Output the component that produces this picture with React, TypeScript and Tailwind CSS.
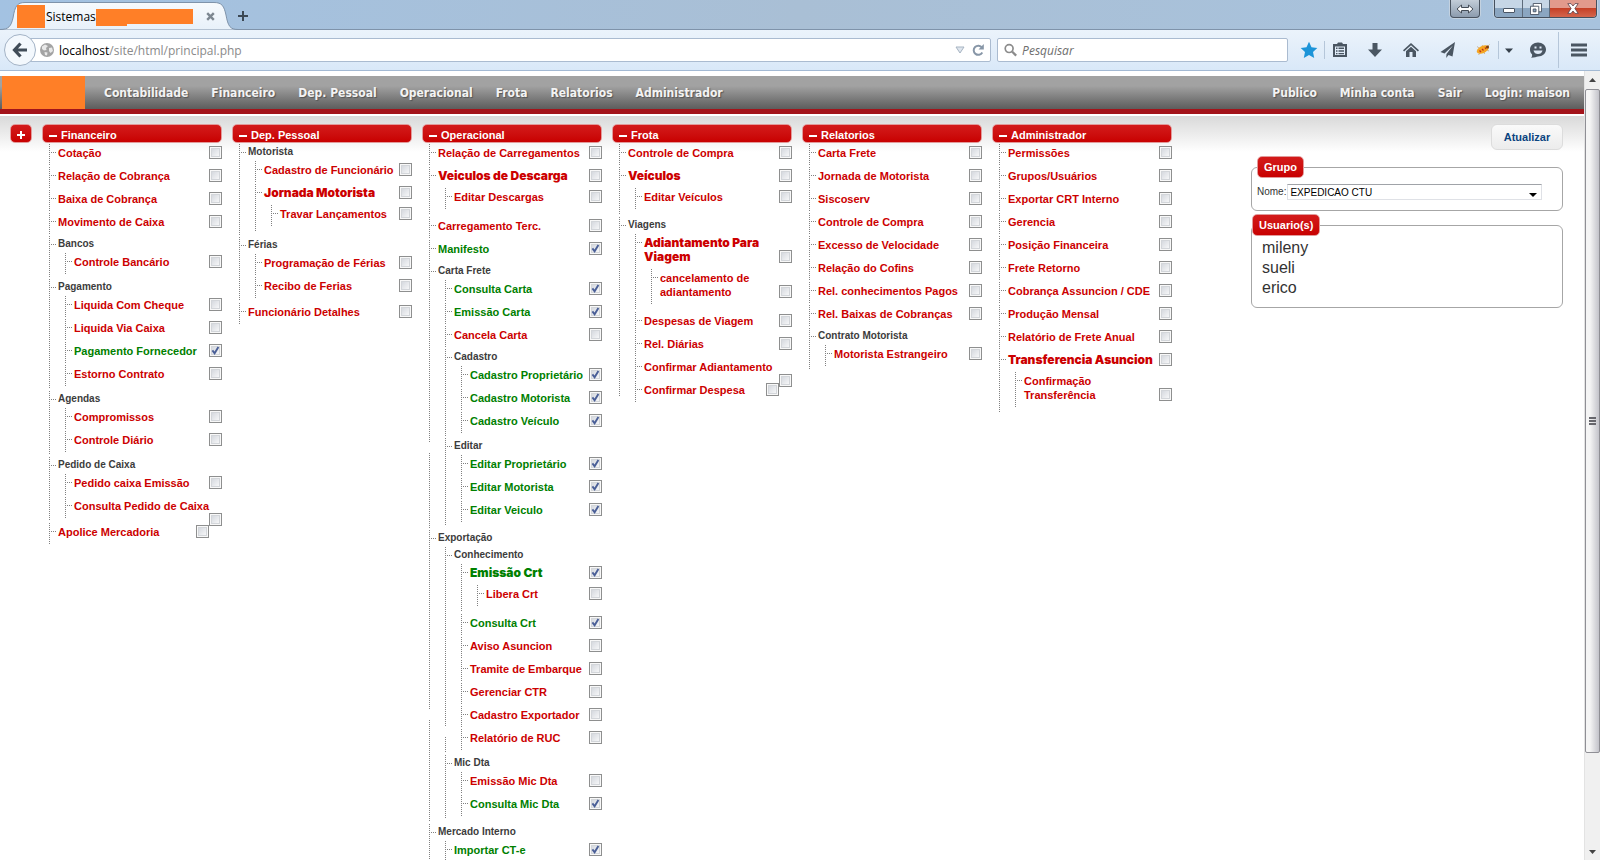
import { useId, useState } from "react";
import type { ReactNode } from "react";

type Item = {
  name: string;
  on?: boolean;
  group?: boolean;
  wrap?: boolean;
  children?: Item[];
};

const group = (name: string, children: Item[]): Item => ({ name, group: true, children });
const off = (name: string, children?: Item[]): Item => ({ name, children });
const on = (name: string, children?: Item[]): Item => ({ name, on: true, children });
const long = (name: string): Item => ({ name, wrap: true });

const columns: { title: string; items: Item[] }[] = [
  {
    title: "Financeiro",
    items: [
      off("Cotação"),
      off("Relação de Cobrança"),
      off("Baixa de Cobrança"),
      off("Movimento de Caixa"),
      group("Bancos", [off("Controle Bancário")]),
      group("Pagamento", [
        off("Liquida Com Cheque"),
        off("Liquida Via Caixa"),
        on("Pagamento Fornecedor"),
        off("Estorno Contrato"),
      ]),
      group("Agendas", [off("Compromissos"), off("Controle Diário")]),
      group("Pedido de Caixa", [off("Pedido caixa Emissão"), long("Consulta Pedido de Caixa")]),
      off("Apolice Mercadoria"),
    ],
  },
  {
    title: "Dep. Pessoal",
    items: [
      group("Motorista", [
        off("Cadastro de Funcionário"),
        off("Jornada Motorista", [off("Travar Lançamentos")]),
      ]),
      group("Férias", [off("Programação de Férias"), off("Recibo de Ferias")]),
      off("Funcionário Detalhes"),
    ],
  },
  {
    title: "Operacional",
    items: [
      off("Relação de Carregamentos"),
      off("Veiculos de Descarga", [off("Editar Descargas")]),
      off("Carregamento Terc."),
      on("Manifesto"),
      group("Carta Frete", [
        on("Consulta Carta"),
        on("Emissão Carta"),
        off("Cancela Carta"),
        group("Cadastro", [
          on("Cadastro Proprietário"),
          on("Cadastro Motorista"),
          on("Cadastro Veículo"),
        ]),
        group("Editar", [on("Editar Proprietário"), on("Editar Motorista"), on("Editar Veiculo")]),
      ]),
      group("Exportação", [
        group("Conhecimento", [
          on("Emissão Crt", [off("Libera Crt")]),
          on("Consulta Crt"),
          off("Aviso Asuncion"),
          off("Tramite de Embarque"),
          off("Gerenciar CTR"),
          off("Cadastro Exportador"),
          off("Relatório de RUC"),
        ]),
        group("Mic Dta", [off("Emissão Mic Dta"), on("Consulta Mic Dta")]),
      ]),
      group("Mercado Interno", [on("Importar CT-e")]),
    ],
  },
  {
    title: "Frota",
    items: [
      off("Controle de Compra"),
      off("Veículos", [off("Editar Veículos")]),
      group("Viagens", [
        off("Adiantamento Para\nViagem", [off("cancelamento de\nadiantamento")]),
        off("Despesas de Viagem"),
        off("Rel. Diárias"),
        long("Confirmar Adiantamento"),
        off("Confirmar Despesa"),
      ]),
    ],
  },
  {
    title: "Relatorios",
    items: [
      off("Carta Frete"),
      off("Jornada de Motorista"),
      off("Siscoserv"),
      off("Controle de Compra"),
      off("Excesso de Velocidade"),
      off("Relação do Cofins"),
      off("Rel. conhecimentos Pagos"),
      off("Rel. Baixas de Cobranças"),
      group("Contrato Motorista", [off("Motorista Estrangeiro")]),
    ],
  },
  {
    title: "Administrador",
    items: [
      off("Permissões"),
      off("Grupos/Usuários"),
      off("Exportar CRT Interno"),
      off("Gerencia"),
      off("Posição Financeira"),
      off("Frete Retorno"),
      off("Cobrança Assuncion / CDE"),
      off("Produção Mensal"),
      off("Relatório de Frete Anual"),
      off("Transferencia Asuncion", [off("Confirmação\nTransferência")]),
    ],
  },
];

const redBox = "border border-[#e29a9a] bg-linear-to-b from-[#d31a1a] to-[#c80000] font-bold text-white";

/* Dotted guide: horizontal stub, periodic break in the stem, then the stem itself. */
const guide =
  "bg-[image:repeating-linear-gradient(to_right,#808080_0_1px,transparent_1px_2px),linear-gradient(transparent_179px,white_179px),repeating-linear-gradient(to_bottom,#808080_0_1px,transparent_1px_2px)] bg-size-[8px_1px,1px_190px,1px_100%] bg-position-[0_8px,0_0,0_0] [background-repeat:no-repeat,repeat-y,no-repeat]";

function CheckBox({ id, checked, onChange }: { id: string; checked: boolean; onChange: (v: boolean) => void }) {
  return (
    <span className="relative float-right block size-[13px]">
      <input
        id={id}
        type="checkbox"
        checked={checked}
        onChange={(e) => onChange(e.target.checked)}
        className="block size-[13px] appearance-none border border-[#8e8f8f] bg-linear-to-br from-[#cdd1d8] to-white shadow-[inset_0_0_0_1px_#f8f8f8,inset_0_0_0_2px_#d3d6da]"
      />
      {checked && (
        <svg viewBox="0 0 13 13" className="pointer-events-none absolute inset-0 size-[13px]" aria-hidden="true">
          <path d="M3.4 6.4 5.6 9.3 9.4 3" fill="none" stroke="#4a5f97" strokeWidth="1.9" />
        </svg>
      )}
    </span>
  );
}

function Node({ item }: { item: Item }) {
  const id = useId();
  const [checked, setChecked] = useState(!!item.on);
  const sub = item.children && (
    <ul className="clear-both ml-[7px]">
      {item.children.map((c) => (
        <Node key={c.name} item={c} />
      ))}
    </ul>
  );
  if (item.group) {
    return (
      <li className={`mb-[2px] pb-px pl-[9px] ${guide}`}>
        <h3 className="h-[17px] text-[10px] leading-[15px] font-bold text-[#3c3c3c]">{item.name}</h3>
        {sub}
      </li>
    );
  }
  return (
    <li className={`mb-[2px] pl-[9px] ${guide} ${item.children ? "pb-[4px]" : ""}`}>
      <div
        className={`pt-[2px] pb-[5px] ${
          item.children ? "font-['Inter'] text-[12px] leading-[14px] font-black" : "text-[11px] leading-[14px] font-bold"
        }`}
      >
        <label
          htmlFor={id}
          className={`whitespace-pre ${checked ? "text-[#008000]" : "text-[#cc0000]"} ${item.wrap ? "block" : ""}`}
        >
          {item.name}
        </label>
        <CheckBox id={id} checked={checked} onChange={setChecked} />
      </div>
      {sub}
    </li>
  );
}

function Column({ title, items }: { title: string; items: Item[] }) {
  const [open, setOpen] = useState(true);
  return (
    <section className="w-[180px] shrink-0">
      <button
        type="button"
        onClick={() => setOpen(!open)}
        className={`flex h-[19px] w-full items-center gap-1 rounded-[5px] px-[6px] pt-[2px] text-[11px] leading-[14px] ${redBox}`}
      >
        <span className="mt-[2px] h-[2px] w-[8px] bg-white" />
        {title}
      </button>
      {open && (
        <ul className="mt-px ml-[7px]">
          {items.map((i) => (
            <Node key={i.name} item={i} />
          ))}
        </ul>
      )}
    </section>
  );
}

function Tool({ label, children }: { label: string; children: ReactNode }) {
  return (
    <button type="button" aria-label={label} className="flex size-[18px] items-center justify-center">
      <svg viewBox="0 0 18 18" className="size-[18px] fill-[#4a5662]" aria-hidden="true">
        {children}
      </svg>
    </button>
  );
}

function TabStrip() {
  return (
    <header className="relative flex h-[29px] shrink-0 items-start justify-between bg-linear-to-r from-[#a3c2e2] via-[#a9bfd5] to-[#a8c3de]">
      <svg viewBox="0 0 242 30" className="absolute top-0 left-0 h-[30px] w-[242px]" aria-hidden="true">
        <defs>
          <linearGradient id="tab" x2="0" y2="1">
            <stop offset="0" stopColor="#f7fafd" />
            <stop offset="1" stopColor="#e8f1fa" />
          </linearGradient>
        </defs>
        <path
          d="M0 29.5C9 29.500 11 26 13 18C15 6 17 2.500 25 2.500H214C222 2.500 224 6 226 15C228 26 230 29.500 238 29.500"
          fill="url(#tab)"
          stroke="#7f93aa"
        />
      </svg>
      <div className="relative flex items-center">
        <div className="flex w-[242px] items-center pt-[5px] pl-[17px]">
          <span className="h-[23px] w-[28px] bg-[#ff7f27]" />
          <span className="ml-px text-[12px] leading-[20px] text-black">Sistemas</span>
          <span className="h-[15px] w-[97px] bg-[#ff7f27]">
            <span className="block h-[17px] w-[31px] bg-[#ff7f27]" />
          </span>
          <button type="button" aria-label="Fechar aba" className="ml-[13px]">
            <svg viewBox="0 0 9 9" className="size-[9px]" aria-hidden="true">
              <path d="M1.200 1.200 7.800 7.800M7.800 1.200 1.200 7.800" stroke="#7d8791" strokeWidth="2.400" />
            </svg>
          </button>
        </div>
        <button type="button" aria-label="Nova aba" className="-ml-[4px] pt-[3px]">
          <svg viewBox="0 0 10 10" className="size-[10px]" aria-hidden="true">
            <path d="M5 0V10M0 5H10" stroke="#3c4854" strokeWidth="2" />
          </svg>
        </button>
      </div>
      <div className="relative flex items-start pr-[3px]">
        <button
          type="button"
          aria-label="Redimensionar"
          className="mr-[14px] flex h-[18px] w-[30px] items-center justify-center rounded-b-[4px] border border-t-0 border-[#4a5460] bg-linear-to-b from-[#c3cdd8] to-[#8c9cae] shadow-[0_0_0_1px_#c4d2e0]"
        >
          <svg viewBox="0 0 18 10" className="h-[10px] w-[18px]" aria-hidden="true">
            <path d="M1 5 5.500 1V3.500H12.500V1L17 5 12.500 9V6.500H5.500V9Z" fill="#fff" stroke="#454d57" />
          </svg>
        </button>
        <div className="flex h-[18px] overflow-hidden rounded-b-[4px] border border-t-0 border-[#45505e] shadow-[0_0_0_1px_#c4d2e0]">
          <button
            type="button"
            aria-label="Minimizar"
            className="flex w-[28px] items-end justify-center border-r border-[#5d6b7b] bg-linear-to-b from-[#c6d6e6] from-50% to-[#8ba6c1] to-50% pb-[4px]"
          >
            <span className="h-[5px] w-[12px] rounded-[1px] border border-[#4a5564] bg-white" />
          </button>
          <button
            type="button"
            aria-label="Restaurar"
            className="flex w-[27px] items-center justify-center border-r border-[#5d6b7b] bg-linear-to-b from-[#c6d6e6] from-50% to-[#8ba6c1] to-50%"
          >
            <svg viewBox="0 0 13 13" className="size-[12px]" fill="#fff" stroke="#4a5564" aria-hidden="true">
              <path d="M3.500 .5H12.500V9.500H3.500Z" />
              <path d="M.5 3.500H9.500V12.500H.5Z" />
              <path d="M3.500 6.500H6.500V9.500H3.500Z" fill="#8ba6c1" />
            </svg>
          </button>
          <button
            type="button"
            aria-label="Fechar"
            className="flex w-[46px] items-center justify-center bg-linear-to-b from-[#e29a8c] from-45% via-[#c43c22] via-45% to-[#d4654c]"
          >
            <svg viewBox="0 0 12 11" className="h-[11px] w-[12px]" aria-hidden="true">
              <path
                d="M.8 .6H4L6 3 8 .6H11.200L7.900 5.500 11.200 10.400H8L6 8 4 10.400H.8L4.100 5.500Z"
                fill="#fff"
                stroke="#59404a"
                strokeWidth=".8"
              />
            </svg>
          </button>
        </div>
      </div>
    </header>
  );
}

function Toolbar() {
  return (
    <div className="flex h-[42px] shrink-0 items-center border-t border-b border-t-[#7f93aa] border-b-[#a3b9d3] bg-linear-to-b from-[#ebf3fb] to-[#d9e8f8] pr-[12px] pl-[4px]">
      <button
        type="button"
        aria-label="Voltar"
        className="relative z-10 flex size-[32px] shrink-0 items-center justify-center rounded-full border border-[#a3b3c6] bg-[#f3f8fd]"
      >
        <svg viewBox="0 0 16 16" className="size-[16px]" aria-hidden="true">
          <path d="M8.500 1.500 2.500 8 8.500 14.500M3 8H15" fill="none" stroke="#404c58" strokeWidth="3.200" />
        </svg>
      </button>
      <div className="-ml-[6px] flex h-[24px] flex-1 items-center rounded-r-[2px] border border-[#aabbd0] bg-white pl-[9px] pr-[5px]">
        <svg viewBox="0 0 14 14" className="size-[14px] shrink-0" aria-hidden="true">
          <circle cx="7" cy="7" r="7" fill="#a3a3a3" />
          <path d="M2 3.500 5 1.500 8 3 6 5 6.500 7 4 7.500 2 6ZM9 5 12 4.500 13 8 10.500 10 9 8ZM4.500 9 7.500 9.500 7 12.500 5 12Z" fill="#e9e9e9" />
        </svg>
        <span className="ml-[5px] flex-1 pt-[2px] text-[12px] leading-[20px] text-[#8a8a8a]">
          <span className="text-black">localhost</span>/site/html/principal.php
        </span>
        <svg viewBox="0 0 10 8" className="h-[8px] w-[10px]" aria-hidden="true">
          <path d="M1 1H9L5 7Z" fill="#dfe6ee" stroke="#a7b4c2" />
        </svg>
        <button type="button" aria-label="Recarregar" className="ml-[6px]">
          <svg viewBox="0 0 14 14" className="size-[14px]" aria-hidden="true">
            <path d="M11 4.500A4.600 4.600 0 1 0 11.300 9.500" fill="none" stroke="#8796a7" strokeWidth="2" />
            <path d="M12.800 1V6.500H7.500Z" fill="#8796a7" />
          </svg>
        </button>
      </div>
      <label className="ml-[6px] flex h-[24px] w-[291px] items-center rounded-[2px] border border-[#aabbd0] bg-white pl-[6px]">
        <svg viewBox="0 0 14 14" className="size-[14px]" fill="none" stroke="#8b8b8b" aria-hidden="true">
          <circle cx="5.500" cy="5.500" r="4.200" strokeWidth="1.800" />
          <path d="M8.800 8.800 13 13" strokeWidth="2.400" />
        </svg>
        <input
          type="search"
          aria-label="Pesquisar"
          placeholder="Pesquisar"
          className="ml-[5px] w-full pt-[2px] text-[12px] italic outline-none placeholder:text-[#6d6d6d]"
        />
      </label>
      <div className="ml-[12px] flex items-center">
        <Tool label="Favoritos">
          <path d="M9 .8 11.500 6.300 17.300 7 13 11 14.200 17 9 14 3.800 17 5 11 .7 7 6.500 6.300Z" fill="#1c94d8" />
        </Tool>
        <span className="mx-[6px] h-[18px] w-px bg-[#b5c6d9]" />
        <Tool label="Lista">
          <path d="M2 3H6L7 1.500H11L12 3H16V16H2ZM4 5.500V14H14V5.500Z" fillRule="evenodd" />
          <path d="M5 6.500H6.500V8H5ZM7.500 6.500H13V8H7.500ZM5 9.200H6.500V10.700H5ZM7.500 9.200H13V10.700H7.500ZM5 11.900H6.500V13.300H5ZM7.500 11.900H13V13.300H7.500Z" />
        </Tool>
        <span className="w-[17px]" />
        <Tool label="Downloads">
          <path d="M6.500 2H11.500V8.500H16L9 16 2 8.500H6.500Z" />
        </Tool>
        <span className="w-[18px]" />
        <Tool label="Início">
          <path d="M9 2 17 9.300 15.900 10.500 9 4.200 2.100 10.500 1 9.300Z" />
          <path d="M4 10.200 9 5.700 14 10.200V16H10.500V11H7.500V16H4Z" />
        </Tool>
        <span className="w-[19px]" />
        <Tool label="Enviar">
          <path d="M16 1 1.500 11 5.500 12.500 14 4.500 7.500 13 7.200 17 9.500 14 13.500 15.500Z" />
        </Tool>
        <span className="w-[17px]" />
        <Tool label="Depurar">
          <g stroke="#b98a50" strokeWidth=".6">
            <path d="M5 7 3 5.500M6 12 4.500 14M10 11 10.500 13M9 5.500 8 4M13 9 15 10M14 5 15.500 3.500" />
          </g>
          <ellipse cx="8.800" cy="8.500" rx="6.500" ry="3.500" transform="rotate(-25 8.800 8.500)" fill="#f5a623" />
          <path d="M5.500 9.500 7 11M8 8 9.500 9.500M11 6.500 12 8" stroke="#c0301a" strokeWidth="1.300" />
          <circle cx="13.500" cy="6" r="1.500" fill="#7a3c10" />
        </Tool>
        <span className="ml-[6px] h-[18px] w-px bg-[#b5c6d9]" />
        <svg viewBox="0 0 8 5" className="mx-[6px] h-[5px] w-[8px]" aria-hidden="true">
          <path d="M0 .5H8L4 5Z" fill="#36414c" />
        </svg>
        <span className="w-[10px]" />
        <Tool label="Conversa">
          <path
            d="M9 1.500C13.500 1.500 17 4.500 17 8.500S13.500 15.500 9 15.500C7.500 15.500 5.500 16.800 2 16.800 3.300 15.500 3.200 14.300 3 13.200 1.500 12 1 10.200 1 8.500 1 4.500 4.500 1.500 9 1.500Z"
          />
          <path d="M4.500 9.500H13.500C13 12 11.200 13 9 13S5 12 4.500 9.500Z" fill="#dfeaf7" />
          <path d="M5.500 5.500H7.500V7.500H5.500ZM10.500 5.500H12.500V7.500H10.500Z" fill="#dfeaf7" />
        </Tool>
        <span className="mx-[11px] h-[36px] w-px bg-[#b5c6d9]" />
        <Tool label="Menu">
          <path d="M1 2.500H17V5.500H1ZM1 7.500H17V10.500H1ZM1 12.500H17V15.500H1Z" />
        </Tool>
      </div>
    </div>
  );
}

function SiteNav() {
  const left = ["Contabilidade", "Financeiro", "Dep. Pessoal", "Operacional", "Frota", "Relatorios", "Administrador"];
  const right = ["Publico", "Minha conta", "Sair", "Login: maison"];
  return (
    <nav className="mt-[5px] mb-[2px] flex h-[38px] items-center justify-between border-b-[5px] border-[#a3131a] bg-linear-to-b from-[#a2a2a2] from-30% to-[#5d5d5d] pr-[14px] pl-[2px] font-['DejaVu_Sans_Condensed','DejaVu_Sans',sans-serif] text-[12px] font-bold text-[#f3f3f3] [text-shadow:1px_1px_1px_#555]">
      <div className="flex items-center">
        <span className="mr-[19px] h-[33px] w-[83px] bg-[#ff7f27]" />
        <div className="flex gap-[23px]">
          {left.map((t) => (
            <a key={t} href="#">
              {t}
            </a>
          ))}
        </div>
      </div>
      <div className="flex items-center gap-[23px]">
        {right.map((t) => (
          <a key={t} href="#">
            {t}
          </a>
        ))}
      </div>
    </nav>
  );
}

function SidePanel() {
  return (
    <aside className="mr-[21px] flex w-[312px] shrink-0 flex-col text-[#333]">
      <button
        type="button"
        className="h-[26px] w-[72px] self-end rounded-[6px] border border-[#dcdcdc] bg-linear-to-b from-[#fafafa] to-[#ececec] text-[11px] font-bold text-[#0b4480]"
      >
        Atualizar
      </button>
      <fieldset className="mt-[6px] h-[55px] rounded-[6px] border border-[#a6a6a6] pl-[5px]">
        <legend className={`h-[22px] rounded-[5px] px-[6px] text-[11px] leading-[20px] ${redBox}`}>Grupo</legend>
        <div className="mt-[6px] flex items-center">
          <label htmlFor="grupo" className="text-[10px] leading-[16px]">
            Nome:
          </label>
          <div className="relative ml-px h-[16px] w-[255px]">
            <select
              id="grupo"
              className="block h-[16px] w-full appearance-none border border-[#dfe1e6] border-t-[#a0a3a8] bg-white pt-px pl-[2px] text-[10px] leading-[14px] text-black"
            >
              <option>EXPEDICAO CTU</option>
            </select>
            <svg viewBox="0 0 8 4" className="pointer-events-none absolute right-[5px] bottom-[3px] h-[4px] w-[8px]" aria-hidden="true">
              <path d="M0 0H8L4 4Z" />
            </svg>
          </div>
        </div>
      </fieldset>
      <fieldset className="mt-[3px] rounded-[6px] border border-[#a6a6a6] pb-[9px]">
        <legend className={`h-[22px] rounded-[5px] px-[6px] text-[11px] leading-[20px] ${redBox}`}>Usuario(s)</legend>
        <ul className="mt-[2px] pl-[10px] text-[16px] leading-[20px]">
          <li>mileny</li>
          <li>sueli</li>
          <li>erico</li>
        </ul>
      </fieldset>
    </aside>
  );
}

function ScrollBar() {
  return (
    <div className="flex w-[16px] shrink-0 flex-col border-l border-[#e3e3e3] bg-[#f0f0f0]" aria-hidden="true">
      <div className="flex h-[18px] shrink-0 items-center justify-center">
        <svg viewBox="0 0 7 4" className="h-[4px] w-[7px]">
          <path d="M0 4H7L3.500 0Z" fill="#444" />
        </svg>
      </div>
      <div className="flex-1">
        <div className="flex h-[88%] flex-col items-center justify-center gap-px rounded-[2px] border border-[#8f8f95] bg-linear-to-r from-[#f5f5f5] from-30% to-[#c3c3ca]">
          <span className="h-[2px] w-[7px] bg-[#66666c]" />
          <span className="h-[2px] w-[7px] bg-[#66666c]" />
          <span className="h-[2px] w-[7px] bg-[#66666c]" />
        </div>
      </div>
      <div className="flex h-[17px] shrink-0 items-center justify-center">
        <svg viewBox="0 0 7 4" className="h-[4px] w-[7px]">
          <path d="M0 0H7L3.500 4Z" fill="#444" />
        </svg>
      </div>
    </div>
  );
}

export default function App() {
  return (
    <div className="flex h-screen flex-col overflow-hidden bg-white font-['Open_Sans','Noto_Sans',sans-serif]">
      <TabStrip />
      <Toolbar />
      <div className="flex min-h-0 flex-1">
        <div className="min-w-0 flex-1 overflow-hidden font-['Liberation_Sans',Arial,sans-serif]">
          <SiteNav />
          <main className="flex items-start justify-between bg-linear-to-b from-[#d9d9d9] to-white to-[36px] pt-[8px] pl-[10px]">
            <div className="flex items-start gap-[10px]">
              <button
                type="button"
                aria-label="Expandir tudo"
                className={`flex h-[19px] w-[22px] items-center justify-center rounded-[5px] pt-[2px] ${redBox}`}
              >
                <svg viewBox="0 0 8 8" className="size-[8px]" aria-hidden="true">
                  <path d="M4 0V8M0 4H8" stroke="#fff" strokeWidth="2" />
                </svg>
              </button>
              {columns.map((c) => (
                <Column key={c.title} title={c.title} items={c.items} />
              ))}
            </div>
            <SidePanel />
          </main>
        </div>
        <ScrollBar />
      </div>
    </div>
  );
}
